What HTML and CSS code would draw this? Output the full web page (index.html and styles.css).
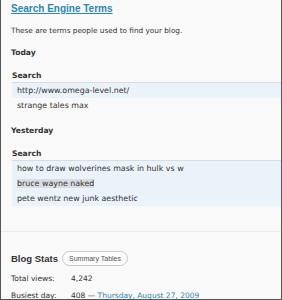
FILE: index.html
```html
<!DOCTYPE html>
<html>
<head>
<meta charset="utf-8">
<link rel="stylesheet" href="styles.css">
</head>
<body>
<div class="frame">
  <h2 class="title"><a href="#">Search Engine Terms</a></h2>
  <p class="desc">These are terms people used to find your blog.</p>
  <h4 class="day">Today</h4>
  <div class="table">
    <div class="th">Search</div>
    <div class="row alt">http://www.omega-level.net/</div>
    <div class="row">strange tales max</div>
  </div>
  <h4 class="day">Yesterday</h4>
  <div class="table">
    <div class="th">Search</div>
    <div class="row alt">how to draw wolverines mask in hulk vs w</div>
    <div class="row alt"><span class="hl">bruce wayne naked</span></div>
    <div class="row alt">pete wentz new junk aesthetic</div>
  </div>
  <hr class="sep">
  <div class="stats-head">
    <h3 class="stats-title">Blog Stats</h3>
    <span class="pill">Summary Tables</span>
  </div>
  <div class="stats">
    <div class="stat"><span class="label">Total views:</span><span>4,242</span></div>
    <div class="stat"><span class="label">Busiest day:</span><span>408 — <a href="#">Thursday, August 27, 2009</a></span></div>
  </div>
</div>
</body>
</html>
```
FILE: styles.css
```css
html, body {
  margin: 0;
  padding: 0;
  background: #f9f9f9;
}
.frame {
  box-sizing: border-box;
  width: 282px;
  height: 300px;
  overflow: hidden;
  border-left: 1px solid #555;
  border-right: 1px solid #555;
  border-bottom: 1px solid #555;
  background: #f9f9f9;
  padding: 2px 0 0 10px;
  font-family: "DejaVu Sans", sans-serif;
  font-size: 8px;
  color: #333;
}
.title {
  margin: 0;
  font-family: "Liberation Sans", Arial, sans-serif;
  font-size: 10px;
  line-height: 13px;
  font-weight: bold;
}
.title a {
  color: #2a88b3;
  text-decoration: underline;
}
.desc {
  margin: 10px 0 0;
  font-size: 7.3px;
  line-height: 12px;
}
.day {
  margin: 12px 0 0;
  font-size: 7.6px;
  line-height: 12px;
  font-weight: bold;
}
.desc + .day { margin-top: 10px; }
.table {
  margin: 11px 0 0 1px;
}
.th {
  font-weight: bold;
  font-size: 7.6px;
  line-height: 12px;
  border-bottom: 1px solid #dcdcdc;
}
.row {
  height: 15px;
  line-height: 15px;
  padding-left: 5px;
  font-size: 7.9px;
  white-space: nowrap;
}
.row.alt { background: #eaf2fa; }
.hl { background: #d9dde2; }
.sep {
  margin: 25px 0 0 -10px;
  border: 0;
  border-top: 1px solid #ececec;
  height: 0;
}
.stats-head {
  display: flex;
  align-items: center;
  gap: 4px;
  margin-top: 19px;
  height: 15px;
}
.stats-title {
  margin: 0;
  font-family: "Liberation Sans", Arial, sans-serif;
  font-size: 9.5px;
  line-height: 15px;
  font-weight: bold;
}
.pill {
  border: 1px solid #c9c9c9;
  border-radius: 8px;
  background: #fcfcfc;
  font-family: "Liberation Sans", Arial, sans-serif;
  font-size: 7px;
  line-height: 13px;
  padding: 0 6px;
  color: #555;
}
.stats {
  margin-top: 4px;
}
.stat {
  display: flex;
  font-size: 7.5px;
  line-height: 17px;
  white-space: nowrap;
}
.label {
  width: 60px;
  flex: none;
}
.stat a { color: #2a88b3; text-decoration: none; }
```
